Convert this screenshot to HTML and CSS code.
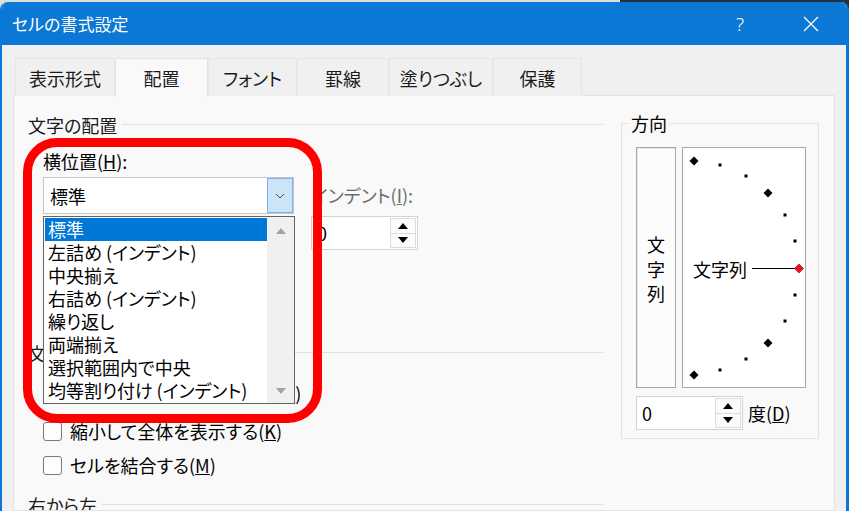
FILE: index.html
```html
<!DOCTYPE html>
<html lang="ja">
<head>
<meta charset="utf-8">
<title>セルの書式設定</title>
<link rel="stylesheet" href="styles.css">
</head>
<body>
<div class="dialog">
  <div class="titlebar">
    <span class="title">セルの書式設定</span>
    <span class="help">?</span>
    <span class="close"><svg width="16" height="16" viewBox="0 0 16 16"><path d="M1 1L15 15M15 1L1 15" stroke="#fff" stroke-width="1.3" fill="none"/></svg></span>
  </div>
  <div class="tabs">
    <div class="tab t1">表示形式</div>
    <div class="tab t2 active">配置</div>
    <div class="tab t3">フォント</div>
    <div class="tab t4">罫線</div>
    <div class="tab t5">塗りつぶし</div>
    <div class="tab t6">保護</div>
  </div>
  <div class="panel">
    <div class="left">
      <div class="ghead"><span>文字の配置</span><i class="rule"></i></div>
      <div class="lbl">横位置(<u>H</u>):</div>
      <div class="row">
        <div class="col-l">
          <div class="combo"><span>標準</span><span class="cbtn"><svg width="10" height="6" viewBox="0 0 10 6"><path d="M1 1L5 5L9 1" stroke="#505050" stroke-width="1" fill="none"/></svg></span></div>
          <div class="lbl2">縦位置(<u>V</u>):</div>
          <div class="combo combo2"><span>中央揃え</span><span class="cbtn plain"><svg width="10" height="6" viewBox="0 0 10 6"><path d="M1 1L5 5L9 1" stroke="#505050" stroke-width="1" fill="none"/></svg></span></div>
        </div>
        <div class="col-r">
          <div class="ilbl">インデント(<u>I</u>):</div>
          <div class="spin"><span class="val">0</span><span class="btns"><b class="up"></b><b class="dn"></b></span></div>
        </div>
      </div>
      <div class="ghead g2"><span>文字の制御</span><i class="rule"></i></div>
      <div class="cb cb1"><i class="box"></i><span>折り返して全体を表示する(<u>W</u>)</span></div>
      <div class="cb cb2"><i class="box"></i><span>縮小して全体を表示する(<u>K</u>)</span></div>
      <div class="cb cb3"><i class="box"></i><span>セルを結合する(<u>M</u>)</span></div>
      <div class="ghead g3"><span>右から左</span><i class="rule"></i></div>
    </div>
    <fieldset class="orient">
      <legend>方向</legend>
      <div class="orow">
        <div class="vbox"><span>文</span><span>字</span><span>列</span></div>
        <div class="dial">
          <svg width="122" height="239" viewBox="0 0 122 239">
            <polygon points="11,8.5 15.5,13 11,17.5 6.5,13" fill="#000"/>
            <polygon points="85,40.5 89.5,45 85,49.5 80.5,45" fill="#000"/>
            <polygon points="85,190.5 89.5,195 85,199.5 80.5,195" fill="#000"/>
            <polygon points="11,222.5 15.5,227 11,231.5 6.5,227" fill="#000"/>
            <rect x="35.5" y="15.5" width="3" height="3" fill="#000"/>
            <rect x="61.5" y="26.5" width="3" height="3" fill="#000"/>
            <rect x="100.5" y="65.5" width="3" height="3" fill="#000"/>
            <rect x="110.5" y="91.5" width="3" height="3" fill="#000"/>
            <rect x="110.5" y="145.5" width="3" height="3" fill="#000"/>
            <rect x="100.5" y="171.5" width="3" height="3" fill="#000"/>
            <rect x="61.5" y="209.5" width="3" height="3" fill="#000"/>
            <rect x="35.5" y="220.5" width="3" height="3" fill="#000"/>
            <line x1="69" y1="120.5" x2="112" y2="120.5" stroke="#000" stroke-width="1"/>
            <polygon points="116,116 120.5,120.5 116,125 111.5,120.5" fill="#e81123" stroke="#a00000" stroke-width="0.6"/>
            <text x="10" y="121" class="dtext" dominant-baseline="central">文字列</text>
          </svg>
        </div>
      </div>
      <div class="drow">
        <div class="spin dspin"><span class="val">0</span><span class="btns"><b class="up"></b><b class="dn"></b></span></div>
        <span class="dlbl">度(<u>D</u>)</span>
      </div>
    </fieldset>
  </div>
</div>

<div class="ddlist">
  <div class="items">
    <div class="item sel">標準</div>
    <div class="item">左詰め (インデント)</div>
    <div class="item">中央揃え</div>
    <div class="item">右詰め (インデント)</div>
    <div class="item">繰り返し</div>
    <div class="item">両端揃え</div>
    <div class="item">選択範囲内で中央</div>
    <div class="item">均等割り付け (インデント)</div>
  </div>
  <div class="sbar"><i class="sup"></i><i class="sdn"></i></div>
</div>
<div class="callout"></div>
</body>
</html>
```
FILE: styles.css
```css
html, body {
  margin: 0;
  padding: 0;
}
body {
  width: 849px;
  height: 511px;
  overflow: hidden;
  position: relative;
  background: linear-gradient(90deg, #dedede 0, #dedede 620px, #26303c 620px);
  font-family: "Noto Sans CJK JP", "Noto Sans", sans-serif;
  font-feature-settings: "palt";
  color: #000;
}
.dialog {
  margin-top: 2px;
  width: 849px;
  height: 509px;
  box-sizing: border-box;
  border-left: 2px solid #0a78d4;
  border-right: 3px solid #0a78d4;
  border-radius: 8px 8px 0 0;
  background: #f0f0f0;
  display: flex;
  flex-direction: column;
  overflow: hidden;
}
.titlebar {
  height: 43px;
  flex: none;
  background: #0a78d4;
  color: #fff;
  display: flex;
  align-items: center;
  padding-left: 10px;
}
.title {
  font-size: 17px;
  line-height: 20px;
}
.help {
  margin-left: auto;
  font-family: "Noto Sans", "DejaVu Sans", sans-serif;
  font-weight: 300;
  font-size: 19px;
  line-height: 20px;
}
.close {
  margin-left: 59px;
  margin-right: 27px;
  width: 16px;
  height: 16px;
  display: flex;
}
.tabs {
  display: flex;
  height: 38px;
  margin: 13px 0 0 13px;
  flex: none;
  position: relative;
  z-index: 1;
}
.tab {
  box-sizing: border-box;
  height: 38px;
  border: 1px solid #e6e6e6;
  border-bottom: none;
  background: #f0f0f0;
  font-size: 18px;
  display: flex;
  align-items: center;
  justify-content: center;
  color: #1a1a1a;
}
.tab.active {
  height: 39px;
  background: #f9f9f9;
  border-color: #e3e3e3;
}
.t1 { width: 100px; }
.t2 { width: 93px; }
.t3 { width: 89px; }
.t4 { width: 92px; }
.t5 { width: 104px; }
.t6 { width: 89px; }
.panel {
  margin-left: 11px;
  width: 822px;
  flex: 1;
  box-sizing: border-box;
  border: 1px solid #e3e3e3;
  margin-top: -1px;
  background: #f9f9f9;
  display: flex;
  align-items: flex-start;
  overflow: hidden;
}
.left {
  width: 575px;
  margin-left: 14px;
  padding-top: 19px;
  display: flex;
  flex-direction: column;
  font-size: 18px;
}
.ghead {
  height: 20px;
  line-height: 20px;
  display: flex;
  align-items: center;
  gap: 5px;
  color: #1a1a1a;
}
.rule {
  flex: 1;
  border-top: 1px solid #e0e0e0;
  margin-top: -2px;
}
.lbl {
  margin: 16px 0 0 15px;
  height: 20px;
  line-height: 20px;
}
.row {
  margin: 6px 0 0 15px;
  display: flex;
  align-items: flex-start;
}
.col-l {
  width: 251px;
  display: flex;
  flex-direction: column;
}
.combo {
  height: 37px;
  box-sizing: border-box;
  border: 1px solid #c6c6c6;
  background: #fff;
  display: flex;
  align-items: center;
  padding-left: 6px;
  line-height: 20px;
}
.cbtn {
  margin-left: auto;
  align-self: stretch;
  width: 26px;
  box-sizing: border-box;
  background: #cce4f7;
  border: 1px solid #7eb4ea;
  display: flex;
  align-items: center;
  justify-content: center;
}
.cbtn.plain {
  background: #fff;
  border-color: #fff;
}
.lbl2 {
  margin-top: 27px;
  height: 20px;
  line-height: 20px;
}
.combo2 {
  margin-top: 6px;
}
.col-r {
  margin-left: 17px;
  width: 107px;
  display: flex;
  flex-direction: column;
}
.ilbl {
  height: 37px;
  line-height: 37px;
  color: #6d6d6d;
  white-space: nowrap;
  padding-left: 1px;
}
.spin {
  margin-top: 2px;
  width: 107px;
  height: 34px;
  box-sizing: border-box;
  border: 1px solid #d3d3d3;
  background: #fff;
  display: flex;
  font-size: 18px;
}
.val {
  flex: 1;
  padding-left: 5px;
  line-height: 32px;
}
.btns {
  width: 26px;
  display: flex;
  flex-direction: column;
  padding: 1px 1px 1px 0;
}
.btns b {
  flex: 1;
  border: 1px solid #dcdcdc;
  background: #fbfbfb;
  display: flex;
  align-items: center;
  justify-content: center;
}
.btns b + b {
  border-top: none;
}
.up::after {
  content: "";
  border-left: 5px solid transparent;
  border-right: 5px solid transparent;
  border-bottom: 6px solid #000;
}
.dn::after {
  content: "";
  border-left: 5px solid transparent;
  border-right: 5px solid transparent;
  border-top: 6px solid #000;
}
.g2 { margin-top: 39px; }
.g3 { margin-top: 20px; }
.cb {
  margin-left: 15px;
  height: 20px;
  line-height: 20px;
  display: flex;
  align-items: center;
  gap: 8px;
  white-space: nowrap;
}
.cb1 { margin-top: 20px; }
.cb2 { margin-top: 18px; }
.cb3 { margin-top: 14px; }
.box {
  width: 19px;
  height: 19px;
  box-sizing: border-box;
  border: 1px solid #7a7a7a;
  border-radius: 3px;
  background: #fdfdfd;
  flex: none;
}
.orient {
  margin: 17px 0 0 18px;
  width: 198px;
  box-sizing: border-box;
  border: 1px solid #e3e3e3;
  padding: 14px 0 8px 14px;
  min-width: 0;
  font-size: 18px;
}
.orient legend {
  margin-left: -7px;
  padding: 0 2px;
  line-height: 20px;
  height: 20px;
}
.orow {
  display: flex;
  gap: 6px;
  height: 241px;
}
.vbox {
  width: 40px;
  box-sizing: border-box;
  border: 1px solid #a9a9a9;
  box-shadow: inset 1px 1px 0 #e6e6e6;
  background: #fcfcfc;
  display: flex;
  flex-direction: column;
  align-items: center;
  justify-content: center;
  line-height: 24.5px;
  padding-top: 3px;
}
.dial {
  width: 124px;
  box-sizing: border-box;
  border: 1px solid #a9a9a9;
  background: #fff;
}
.dial svg {
  display: block;
}
.dtext {
  font-family: "Noto Sans CJK JP", sans-serif;
  font-size: 18px;
  fill: #000;
}
.drow {
  margin-top: 8px;
  display: flex;
  align-items: center;
}
.dspin {
  margin-top: 0;
}
.dlbl {
  margin-left: 5px;
  line-height: 20px;
}
.ddlist {
  position: absolute;
  left: 43px;
  top: 216px;
  width: 252px;
  height: 188px;
  box-sizing: border-box;
  border: 1px solid #646464;
  background: #fff;
  display: flex;
  z-index: 4;
  font-size: 18px;
}
.items {
  width: 223px;
  padding: 1px 0 0 1px;
  box-sizing: border-box;
}
.item {
  height: 23px;
  line-height: 23px;
  padding-left: 3px;
  white-space: nowrap;
}
.item.sel {
  background: #0078d7;
  color: #fff;
}
.sbar {
  width: 27px;
  background: #f0f0f0;
  display: flex;
  flex-direction: column;
  align-items: center;
  justify-content: space-between;
  padding: 11px 0 9px;
  box-sizing: border-box;
}
.sup {
  width: 0;
  height: 0;
  border-left: 5px solid transparent;
  border-right: 5px solid transparent;
  border-bottom: 6px solid #a3a3a3;
}
.sdn {
  width: 0;
  height: 0;
  border-left: 5px solid transparent;
  border-right: 5px solid transparent;
  border-top: 6px solid #a3a3a3;
}
.callout {
  position: absolute;
  left: 23px;
  top: 138px;
  width: 299px;
  height: 285px;
  box-sizing: border-box;
  border: 9px solid #ff0000;
  border-radius: 34px;
  z-index: 5;
}
```
